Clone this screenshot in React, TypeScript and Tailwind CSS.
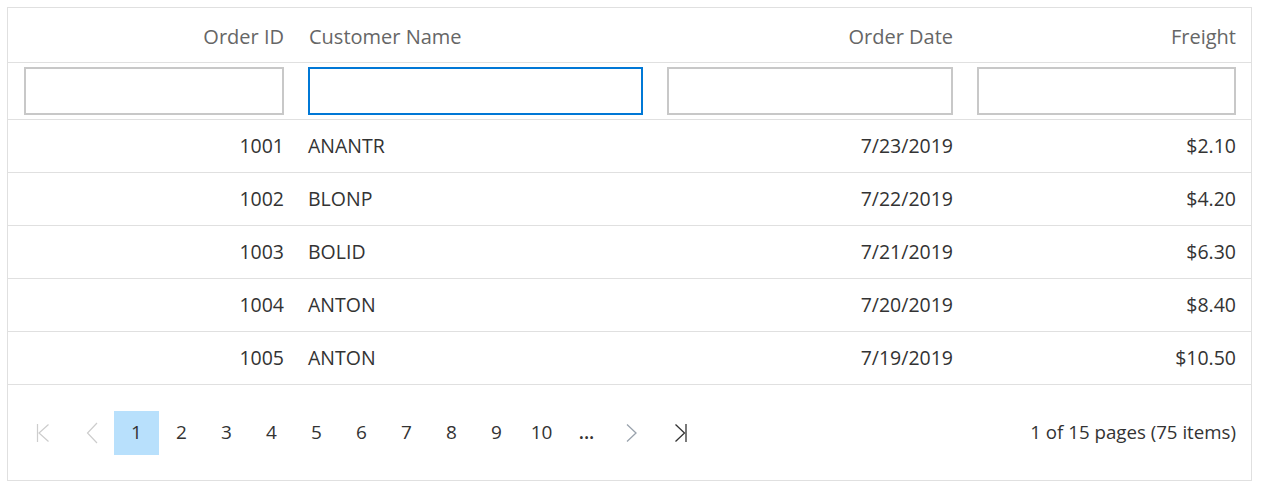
const rows = [
  { id: 1001, name: "ANANTR", date: "7/23/2019", freight: "$2.10" },
  { id: 1002, name: "BLONP", date: "7/22/2019", freight: "$4.20" },
  { id: 1003, name: "BOLID", date: "7/21/2019", freight: "$6.30" },
  { id: 1004, name: "ANTON", date: "7/20/2019", freight: "$8.40" },
  { id: 1005, name: "ANTON", date: "7/19/2019", freight: "$10.50" },
]

const cols = "grid grid-cols-[288px_359px_310px_286px]"

function FirstIcon() {
  return (
    <svg width="14" height="20" viewBox="0 0 14 20" fill="none" stroke="#cdcdcd" strokeWidth="1.2">
      <path d="M1.5 1v18" />
      <path d="M12.5 1.5L3 10l9.5 8.5" />
    </svg>
  )
}

function PrevIcon() {
  return (
    <svg width="12" height="22" viewBox="0 0 12 22" fill="none" stroke="#cdcdcd" strokeWidth="1.2">
      <path d="M11 1L1.5 11 11 21" />
    </svg>
  )
}

function NextIcon() {
  return (
    <svg width="12" height="20" viewBox="0 0 12 20" fill="none" stroke="#9aa3ad" strokeWidth="1.3">
      <path d="M1 1.5L10 10 1 18.5" />
    </svg>
  )
}

function LastIcon() {
  return (
    <svg width="14" height="20" viewBox="0 0 14 20" fill="none" stroke="#333" strokeWidth="1.3">
      <path d="M1.5 1.5L10.5 10l-9 8.5" />
      <path d="M12 1v18" />
    </svg>
  )
}

export default function App() {
  return (
    <div className="bg-white w-[1261px] h-[490px] pt-[7px] pl-[7px]" style={{ fontFamily: '"Open Sans", "Noto Sans", sans-serif' }}>
      <div className="w-[1245px] border border-[#e0e0e0] text-[19.5px]">
        {/* header */}
        <div className={`${cols} h-[55px] border-b border-[#e0e0e0] text-[#666] text-[20px]`}>
          <div className="flex items-center justify-end pl-4 pr-3 pt-1">Order ID</div>
          <div className="flex items-center px-3 pt-1 pl-[13px]">Customer Name</div>
          <div className="flex items-center justify-end px-3 pt-1">Order Date</div>
          <div className="flex items-center justify-end pl-3 pr-[15px] pt-1">Freight</div>
        </div>
        {/* filter bar */}
        <div className={`${cols} h-[57px] border-b border-[#e0e0e0] pt-1`}>
          <div className="pl-4 pr-3">
            <div className="h-[48px] border-2 border-[#c8c8c8]" />
          </div>
          <div className="px-3">
            <div className="h-[48px] border-2 border-[#0078d6]" />
          </div>
          <div className="px-3">
            <div className="h-[48px] border-2 border-[#c8c8c8]" />
          </div>
          <div className="pl-3 pr-[15px]">
            <div className="h-[48px] border-2 border-[#c8c8c8]" />
          </div>
        </div>
        {/* rows */}
        {rows.map((r) => (
          <div key={r.id} className={`${cols} h-[53px] border-b border-[#e0e0e0] text-[#333]`}>
            <div className="flex items-center justify-end pl-4 pr-3">{r.id}</div>
            <div className="flex items-center px-3">{r.name}</div>
            <div className="flex items-center justify-end px-3">{r.date}</div>
            <div className="flex items-center justify-end pl-3 pr-[15px]">{r.freight}</div>
          </div>
        ))}
        {/* pager */}
        <div className="flex items-center justify-between h-[95px] pl-3 pr-[15px] text-[#333] text-[19px]">
          <div className="flex items-center">
            <div className="w-[45px] h-[44px] flex items-center justify-center mr-1"><FirstIcon /></div>
            <div className="w-[45px] h-[44px] flex items-center justify-center"><PrevIcon /></div>
            {[1, 2, 3, 4, 5, 6, 7, 8, 9, 10].map((n) => (
              <div
                key={n}
                className={`w-[45px] h-[44px] flex items-center justify-center ${n === 1 ? "bg-[#b8e0fc]" : ""}`}
              >
                {n}
              </div>
            ))}
            <div className="w-[45px] h-[44px] flex items-center justify-center font-semibold">...</div>
            <div className="w-[45px] h-[44px] flex items-center justify-center"><NextIcon /></div>
            <div className="w-[45px] h-[44px] flex items-center justify-center ml-1"><LastIcon /></div>
          </div>
          <div className="text-[18.7px]">1 of 15 pages (75 items)</div>
        </div>
      </div>
    </div>
  )
}
